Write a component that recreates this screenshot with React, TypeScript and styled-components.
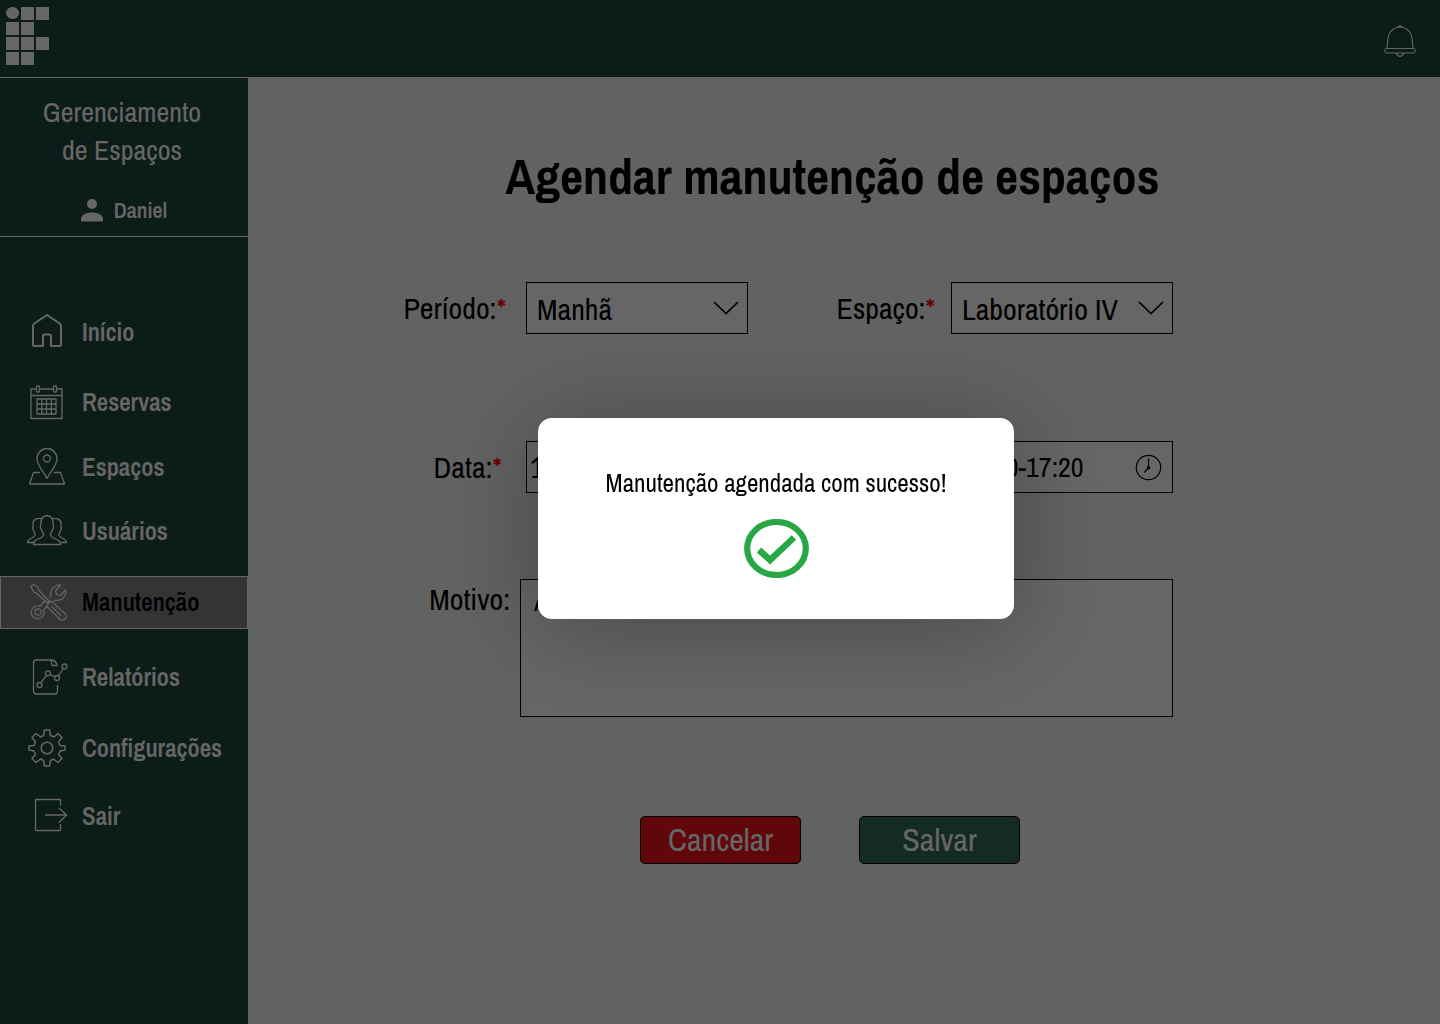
import React from 'react';
import styled, { createGlobalStyle } from 'styled-components';

const Global = createGlobalStyle`
  * { box-sizing: border-box; }
  body { margin: 0; font-family: 'Archivo Narrow', 'Liberation Sans Narrow', 'Arial Narrow', 'Liberation Sans', sans-serif; color: #000; background: #f4f4f4; }
  button, input, select, textarea { font: inherit; color: inherit; }
`;

const Page = styled.div`
  min-height: 100vh;
  display: flex;
  flex-direction: column;
`;

const Header = styled.header`
  height: 77px;
  padding: 7px 22px 0 6px;
  display: flex;
  justify-content: space-between;
  background: #20463e;
`;

const Bell = styled.button`
  align-self: flex-start;
  margin-top: 16px;
  padding: 0;
  border: 0;
  background: none;
  display: flex;
`;

const Body = styled.div`
  flex: 1;
  display: flex;
`;

const Sidebar = styled.aside`
  width: 248px;
  flex-shrink: 0;
  border-top: 1px solid #fff;
  background: #20463e;
  color: #fff;
`;

const Brand = styled.div`
  height: 159px;
  padding-top: 15px;
  border-bottom: 1px solid #fff;
  display: flex;
  flex-direction: column;
  align-items: center;
  font-size: 28px;
  line-height: 38px;
  text-align: center;
`;

const BrandName = styled.div`
  width: 170px;
  margin-right: 4px;
`;

const User = styled.div`
  margin: 22px 2px 0 0;
  display: flex;
  align-items: center;
  gap: 9px;
  font-size: 22px;
  font-weight: 600;
`;

const Nav = styled.nav`
  padding-top: 69px;
  display: flex;
  flex-direction: column;
`;

const NavLink = styled.a<{ $space: number; $active?: boolean }>`
  height: 53px;
  margin-top: ${p => p.$space}px;
  padding: 0 0 2px 25px;
  display: flex;
  align-items: center;
  gap: 14px;
  font-size: 25px;
  font-weight: 600;
  text-decoration: none;
  color: ${p => (p.$active ? '#000' : '#fff')};
  background: ${p => (p.$active ? '#828287' : 'transparent')};
  border: 1px solid ${p => (p.$active ? '#fff' : 'transparent')};
  svg { flex-shrink: 0; color: #fff; }
`;

const Main = styled.main`
  flex: 1;
  min-width: 0;
  padding: 69px 121px 40px 0;
  display: flex;
  justify-content: center;
  align-items: flex-start;
`;

const Form = styled.form`
  flex: 0 1 779px;
`;

const Title = styled.h1`
  margin: 0 0 76px;
  padding-left: 98px;
  font-size: 50px;
  line-height: 60px;
  text-align: center;
  white-space: nowrap;
`;

const Row = styled.div<{ $gap: number }>`
  display: flex;
  justify-content: space-between;
  margin-bottom: ${p => p.$gap}px;
`;

const Field = styled.div`
  display: flex;
  align-items: center;
`;

const Label = styled.label<{ $w: number; $end: number }>`
  width: ${p => p.$w}px;
  padding-right: ${p => p.$end}px;
  flex-shrink: 0;
  font-size: 30px;
  line-height: 40px;
  text-align: right;
  white-space: nowrap;
`;

const Star = styled.span`
  color: #f00;
`;

const Box = styled.div`
  width: 222px;
  height: 52px;
  display: grid;
  align-items: center;
  background: #fff;
  border: 1px solid #000;
  > * { grid-area: 1 / 1; min-width: 0; }
  > svg { justify-self: end; margin-right: 8px; pointer-events: none; }
`;

const Select = styled.select`
  width: 100%;
  height: 50px;
  padding: 2px 0 0 10px;
  border: 0;
  background: none;
  appearance: none;
  font-size: 30px;
`;

const TimeInput = styled.input`
  width: 100%;
  height: 50px;
  padding: 0 0 0 9px;
  border: 0;
  background: none;
  font-size: 28px;
`;

const DateInput = styled(TimeInput)`
  padding-left: 2px;
  font-family: Lato, sans-serif;
`;

const Reason = styled.textarea`
  display: block;
  flex: 1;
  min-width: 0;
  height: 138px;
  padding: 2px 13px;
  border: 1px solid #000;
  background: #fff;
  font-size: 28px;
  line-height: 38px;
  resize: none;
`;

const Actions = styled.div`
  margin-top: 99px;
  padding-left: 93px;
  display: flex;
  justify-content: center;
  gap: 58px;
`;

const Action = styled.button<{ $color: string }>`
  width: 161px;
  height: 48px;
  padding: 0;
  border: 1px solid #000;
  border-radius: 5px;
  background: ${p => p.$color};
  color: #fff;
  font-size: 32px;
  line-height: 44px;
`;

const Overlay = styled.div`
  position: fixed;
  inset: 0;
  padding: 13px 0 0 112px;
  display: flex;
  align-items: center;
  justify-content: center;
  background: rgba(0, 0, 0, 0.6);
`;

const Dialog = styled.div`
  width: 476px;
  padding: 49px 0 41px;
  display: flex;
  flex-direction: column;
  align-items: center;
  gap: 20px;
  border-radius: 14px;
  background: #fff;
  box-shadow: 0 10px 100px rgba(0, 0, 0, 0.3);
  font-size: 25px;
  line-height: 32px;
  svg { display: block; }
`;

const Logo = () => (
  <svg width="43" height="58" viewBox="0 0 43 58" fill="#fff" aria-label="IF">
    <ellipse cx="6.5" cy="6" rx="6.5" ry="6" />
    <path d="M15 0h13v13H15zM30 0h13v13H30zM0 15h13v13H0zM15 15h13v13H15zM0 30h13v13H0zM15 30h13v13H15zM30 30h13v13H30zM0 45h13v13H0zM15 45h13v13H15z" />
  </svg>
);

const Icon = ({ children, w = 1.3 }: { children: React.ReactNode; w?: number }) => (
  <svg width="42" height="42" viewBox="0 0 42 42" fill="none" stroke="currentColor" strokeWidth={w} strokeLinejoin="round" aria-hidden="true">
    {children}
  </svg>
);

const HomeIcon = () => (
  <Icon w={2}><path d="M21 4L8.300 12.500Q7 13.500 7 15v18.500A1.500 1.500 0 0 0 8.500 35H17V25a1.500 1.500 0 0 1 1.500-1.500h5A1.500 1.500 0 0 1 25 25V35h8.500a1.500 1.500 0 0 0 1.500-1.500V15q0-1.500-1.300-2.500z" /></Icon>
);
const CalendarIcon = () => (
  <Icon>
    <path d="M10 8H5v29.500h31V8h-5M14 8h13M5 14.500h31M11 18h19v15H11zM11 23h19M11 28h19M15.800 18v15M20.500 18v15M25.300 18v15" />
    <rect x="10.500" y="5" width="3" height="6" rx="1" /><rect x="27.500" y="5" width="3" height="6" rx="1" />
  </Icon>
);
const PinIcon = () => (
  <Icon>
    <path d="M21 32.500C17 25 11 19.500 11 12.500a10 10 0 0 1 20 0C31 19.500 25 25 21 32.500zM14 26.500H7.500L3.500 38h35l-4-11.500H28" />
    <circle cx="21" cy="12.500" r="3.500" />
  </Icon>
);
const UsersIcon = () => (
  <Icon>
    <path d="M7.500 34.500c0-3 1-4 5-5.500 4-1.500 5.500-3 5-5.500-1.500-2-2-3-2.500-5-1-1-.8-3 0-3.500-.5-5 1-9 6-9.500 5 .5 6.500 4.500 6 9.500.8.500 1 2.500 0 3.500-.5 2-1 3-2.500 5-.5 2.500 1 4 5 5.500 4 1.500 5 2.500 5 5.500z" />
    <path d="M16 9c-4-1.500-8.500 0-9 4v4c-1 1 0 3 .8 3.500.5 3 1.700 3 1.200 5C8 28 2 28 1.500 32.500H8M26 9c4-1.500 8.500 0 9 4v4c1 1 0 3-.8 3.500-.5 3-1.700 3-1.200 5 1 2.500 7 2.500 7.500 7H34" />
  </Icon>
);
const ToolsIcon = () => (
  <Icon w={1.200}>
    <path d="M5 5.500l2.500-2L12 6.500l1 3L23 20l-2 2L10.500 12 7.500 11zM22.500 22.500l2.500-2.500 14 12.500a3.800 3.800 0 0 1-5.500 5.500L20.500 25zM25.500 25.500l9.500 9" />
    <path d="M23.500 17l1.500-2c-1.500-6 4-12 10-11l-5.500 5.500 1 4 4 1L39.500 9c1.500 6.500-4 11.500-10 10l-1.500 1.500M18.500 20l-4.500 5.500M21 25.500l-3.500 3.500" />
    <path d="M14 25.200a6.500 6.500 0 1 0 3.800 3.800" /><circle cx="12" cy="31" r="3.200" />
  </Icon>
);
const ReportIcon = () => (
  <Icon>
    <path d="M31.500 29v6a3 3 0 0 1-3 3h-18a3 3 0 0 1-3-3V7a3 3 0 0 1 3-3H26q4.500 1 5 5.500h-3.500a2 2 0 0 1-2-2V4M15 26.700l5.600-7.300M24.300 18.500l4.400 2.400M32.500 20l4.700-7.500" />
    <circle cx="13.500" cy="29" r="2.500" /><circle cx="22" cy="17.300" r="2.500" /><circle cx="31" cy="22" r="2.500" /><circle cx="38.500" cy="10.500" r="2.500" />
  </Icon>
);
const GearIcon = () => (
  <Icon w={1.500}>
    <path d="M18.500 3h5l1 5.500 3.500 1.500L32 6.500 36 10.500 32.500 15l1.500 3.500 5 .500v4l-5 1L32.500 27.500l3.500 4L32 35.500l-4.500-3.500L24.500 33.500l-1 5.500h-5l-1-5.500-3-1.500L10 35.500l-4-4L9.500 27.500 8 24l-5-1v-4l5-.5L9.500 15 6 10.500 10 6.500l4.500 3.500L17.500 8.500z" />
    <circle cx="21" cy="21" r="5.800" />
  </Icon>
);
const ExitIcon = () => (
  <Icon><path d="M34.500 11V5.500a1 1 0 0 0-1-1H10.500a1 1 0 0 0-1 1v29a1 1 0 0 0 1 1h23a1 1 0 0 0 1-1V29M19 20h21.500M33 13l7.500 7-7.500 7.500" /></Icon>
);

const Chevron = () => (
  <svg width="26" height="16" viewBox="0 0 26 16" fill="none" stroke="#000" strokeWidth="1.700" aria-hidden="true"><path d="M1 2l12 11.500L25 2" /></svg>
);
const Clock = () => (
  <svg width="30" height="30" viewBox="0 0 30 30" fill="none" stroke="#000" strokeWidth="1.200" aria-hidden="true">
    <circle cx="14.500" cy="15.500" r="12.200" /><path d="M14.500 6.500V16L10 20.500" /><circle cx="14.500" cy="15.700" r="1.200" fill="#000" />
  </svg>
);

const items = [
  { name: 'Início', icon: HomeIcon, space: 0 },
  { name: 'Reservas', icon: CalendarIcon, space: 17 },
  { name: 'Espaços', icon: PinIcon, space: 12 },
  { name: 'Usuários', icon: UsersIcon, space: 11 },
  { name: 'Manutenção', icon: ToolsIcon, space: 18, active: true },
  { name: 'Relatórios', icon: ReportIcon, space: 22 },
  { name: 'Configurações', icon: GearIcon, space: 18 },
  { name: 'Sair', icon: ExitIcon, space: 15 },
];

export default function App() {
  return (
    <>
      <Global />
      <Page>
        <Header>
          <Logo />
          <Bell aria-label="Notificações">
            <svg width="36" height="36" viewBox="0 0 36 36" fill="none" stroke="#fff" strokeWidth="1.100">
              <path d="M5 25C6 19 5 14 8 9.500Q12 4 18 4t10 5.500C31 14 30 19 31 25M4.500 25.500h27a2.300 2.300 0 0 1 0 4.500h-27a2.300 2.300 0 0 1 0-4.500zM16 4q2-2.500 4 0M14 30q4 7 8 0" />
            </svg>
          </Bell>
        </Header>
        <Body>
          <Sidebar>
            <Brand>
              <BrandName>Gerenciamento de Espaços</BrandName>
              <User>
                <svg width="26" height="26" viewBox="0 0 26 26" fill="#fff" aria-hidden="true"><circle cx="13" cy="7" r="5" /><path d="M2 24v-2c0-4 5-6.500 11-6.500s11 2.500 11 6.500v2q0 .5-.5.5h-21q-.5 0-.5-.5z" /></svg>
                Daniel
              </User>
            </Brand>
            <Nav>
              {items.map(({ name, icon: ItemIcon, space, active }) => (
                <NavLink key={name} href="#" $space={space} $active={active}><ItemIcon />{name}</NavLink>
              ))}
            </Nav>
          </Sidebar>
          <Main>
            <Form onSubmit={e => e.preventDefault()}>
              <Title>Agendar manutenção de espaços</Title>
              <Row $gap={107}>
                <Field>
                  <Label htmlFor="periodo" $w={132} $end={20}>Período:<Star>*</Star></Label>
                  <Box>
                    <Select id="periodo" defaultValue="Manhã"><option>Manhã</option></Select>
                    <Chevron />
                  </Box>
                </Field>
                <Field>
                  <Label htmlFor="espaco" $w={132} $end={16}>Espaço:<Star>*</Star></Label>
                  <Box>
                    <Select id="espaco" defaultValue="Laboratório IV"><option>Laboratório IV</option></Select>
                    <Chevron />
                  </Box>
                </Field>
              </Row>
              <Row $gap={86}>
                <Field>
                  <Label htmlFor="data" $w={132} $end={24}>Data:<Star>*</Star></Label>
                  <Box><DateInput id="data" defaultValue="10/03/2023" /></Box>
                </Field>
                <Field>
                  <Box>
                    <TimeInput aria-label="Horário" defaultValue="13:00-17:20" />
                    <Clock />
                  </Box>
                </Field>
              </Row>
              <Row $gap={0}>
                <Label htmlFor="motivo" $w={126} $end={10}>Motivo:</Label>
                <Reason id="motivo" defaultValue="Ar-condicionado" />
              </Row>
              <Actions>
                <Action type="button" $color="#f01220">Cancelar</Action>
                <Action type="submit" $color="#346b58">Salvar</Action>
              </Actions>
            </Form>
          </Main>
        </Body>
      </Page>
      <Overlay>
        <Dialog role="dialog" aria-label="Confirmação">
          <span>Manutenção agendada com sucesso!</span>
          <svg width="65" height="59" viewBox="0 0 65 59" fill="none" stroke="#28a745" aria-hidden="true">
            <ellipse cx="32.500" cy="29.500" rx="29.300" ry="26.500" strokeWidth="6.200" />
            <path d="M15 31l11 10L50 18.500" strokeWidth="6.500" />
          </svg>
        </Dialog>
      </Overlay>
    </>
  );
}
